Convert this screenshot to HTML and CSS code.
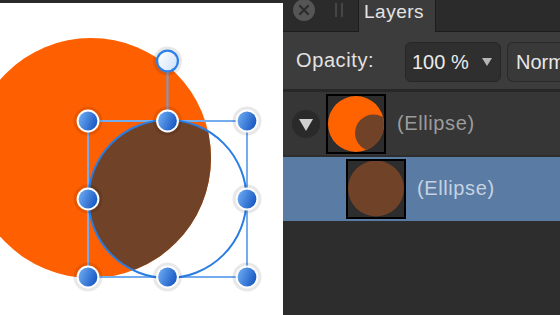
FILE: index.html
```html
<!DOCTYPE html>
<html>
<head>
<meta charset="utf-8">
<link rel="stylesheet" href="styles.css">
</head>
<body>
<div class="app">
  <div class="canvas-col">
    <svg class="canvas" width="283" height="312" viewBox="0 3 283 312">
      <defs>
        <clipPath id="orangeClip"><circle cx="91" cy="158" r="120"/></clipPath>
        <linearGradient id="hblue" x1="0" y1="0.3" x2="1" y2="0.7">
          <stop offset="0" stop-color="#6aa8f0"/>
          <stop offset="1" stop-color="#1656c2"/>
        </linearGradient>
        <linearGradient id="hwhite" x1="0" y1="0.2" x2="1" y2="0.8">
          <stop offset="0" stop-color="#ffffff"/>
          <stop offset="1" stop-color="#cfe2f8"/>
        </linearGradient>
        <g id="handle">
          <circle r="14.5" fill="rgba(0,0,0,0.09)"/>
          <circle r="11.4" fill="#ffffff"/>
          <circle r="9.4" fill="url(#hblue)"/>
        </g>
      </defs>
      <rect x="0" y="3" width="283" height="312" fill="#ffffff"/>
      <circle cx="91" cy="158" r="120" fill="#fe5f00"/>
      <circle cx="167.5" cy="199" r="79" fill="#704227" clip-path="url(#orangeClip)"/>
      <rect x="88" y="121" width="159" height="156" fill="none" stroke="#74acee" stroke-width="2"/>
      <line x1="167.5" y1="61" x2="167.5" y2="121" stroke="#6a9fe2" stroke-width="2"/>
      <circle cx="167.5" cy="199" r="79" fill="none" stroke="#2a7de2" stroke-width="2"/>
      <use href="#handle" x="88" y="121"/>
      <use href="#handle" x="167.5" y="121"/>
      <use href="#handle" x="247" y="121"/>
      <use href="#handle" x="88" y="199"/>
      <use href="#handle" x="247" y="199"/>
      <use href="#handle" x="88" y="277"/>
      <use href="#handle" x="167.5" y="277"/>
      <use href="#handle" x="247" y="277"/>
      <circle cx="167.5" cy="61" r="14.5" fill="rgba(0,0,0,0.09)"/>
      <circle cx="167.5" cy="61" r="10.4" fill="url(#hwhite)" stroke="#2e80e8" stroke-width="2.2"/>
    </svg>
  </div>

  <div class="panel">
    <div class="tabbar">
      <div class="tab-tools">
        <span class="close-btn">
          <svg width="22" height="22" viewBox="0 0 22 22">
            <circle cx="11" cy="11" r="11" fill="#555555"/>
            <path d="M7 7 L15 15 M15 7 L7 15" stroke="#2c2c2c" stroke-width="2.2" stroke-linecap="round"/>
          </svg>
        </span>
        <span class="grip"><i></i><i></i></span>
      </div>
      <div class="tab active">Layers</div>
      <div class="tab-fill"></div>
    </div>

    <div class="opacity-row">
      <span class="label">Opacity:</span>
      <div class="dropdown">
        <span class="value">100 %</span>
        <span class="caret"></span>
      </div>
      <div class="blend">Norm</div>
    </div>

    <div class="layers">
      <div class="layer-row">
        <span class="disclose"><span class="tri"></span></span>
        <span class="thumb">
          <svg width="56" height="56" viewBox="0 0 56 56">
            <defs><clipPath id="tclip"><circle cx="28" cy="28" r="28"/></clipPath></defs>
            <circle cx="28" cy="28" r="28" fill="#fe6300"/>
            <circle cx="45.5" cy="37" r="18.5" fill="#704227" clip-path="url(#tclip)"/>
          </svg>
        </span>
        <span class="name">(Ellipse)</span>
      </div>
      <div class="layer-row child selected">
        <span class="thumb">
          <svg width="56" height="56" viewBox="0 0 56 56">
            <circle cx="28" cy="27.5" r="28" fill="#704227"/>
          </svg>
        </span>
        <span class="name">(Ellipse)</span>
      </div>
    </div>
  </div>
</div>
</body>
</html>
```

FILE: styles.css
```css
html, body {
  margin: 0;
  padding: 0;
  background: #2b2b2b;
  overflow: hidden;
}

.app {
  display: flex;
  width: 560px;
  height: 315px;
  font-family: "Liberation Sans", Arial, sans-serif;
}

.canvas-col {
  width: 283px;
  flex: none;
  padding-top: 3px;
  background: #2a2a2a;
}

.canvas {
  display: block;
}

.panel {
  flex: 1;
  display: flex;
  flex-direction: column;
  background: #2d2d2d;
  overflow: hidden;
}

.tabbar {
  display: flex;
  height: 32px;
  flex: none;
  background: #2b2b2b;
}

.tab-tools {
  width: 75px;
  box-sizing: border-box;
  border-bottom: 1px solid #1c1c1c;
  display: flex;
  align-items: flex-start;
  padding-left: 10px;
}

.close-btn {
  display: block;
  width: 22px;
  height: 22px;
  margin-top: -1px;
}

.close-btn svg {
  display: block;
}

.grip {
  display: flex;
  gap: 4px;
  margin-left: 20px;
  margin-top: 3px;
}

.grip i {
  display: block;
  width: 2px;
  height: 14px;
  background: #464646;
}

.tab {
  width: 78px;
  box-sizing: border-box;
  border-left: 1px solid #1c1c1c;
  border-right: 1px solid #1c1c1c;
  background: #3c3c3c;
  color: #e4e4e4;
  font-size: 19px;
  letter-spacing: 0.5px;
  padding-left: 5px;
  line-height: 23px;
}

.tab-fill {
  flex: 1;
  border-bottom: 1px solid #1c1c1c;
}

.opacity-row {
  height: 57px;
  flex: none;
  display: flex;
  align-items: center;
  background: #3c3c3c;
  padding-left: 13px;
  border-bottom: 3px solid #272727;
  white-space: nowrap;
}

.label {
  color: #e2e2e2;
  font-size: 20px;
  letter-spacing: 0.6px;
  width: 109px;
  flex: none;
  margin-top: 0;
}

.dropdown {
  width: 96px;
  height: 40px;
  flex: none;
  box-sizing: border-box;
  background: #2f2f2f;
  border: 1px solid #262626;
  border-radius: 6px;
  display: flex;
  align-items: center;
  padding-left: 6px;
  margin-top: 2px;
}

.value {
  color: #ebebeb;
  font-size: 20px;
  flex: 1;
  padding-top: 2px;
}

.caret {
  width: 0;
  height: 0;
  border-left: 5px solid transparent;
  border-right: 5px solid transparent;
  border-top: 8px solid #b5b5b5;
  margin-right: 8px;
}

.blend {
  flex: none;
  margin-left: 6px;
  margin-top: 2px;
  height: 40px;
  width: 60px;
  box-sizing: border-box;
  background: #393939;
  border: 1px solid #2a2a2a;
  border-right: none;
  border-radius: 6px 0 0 6px;
  color: #e8e8e8;
  font-size: 20px;
  line-height: 38px;
  padding-left: 8px;
}

.layers {
  display: flex;
  flex-direction: column;
  gap: 2px;
}

.layer-row {
  height: 63px;
  display: flex;
  align-items: center;
  background: #363636;
  padding-left: 9px;
}

.layer-row.child {
  height: 64px;
  padding-left: 63px;
}

.layer-row.selected {
  background: #5a7ca4;
}

.disclose {
  width: 28px;
  height: 28px;
  border-radius: 50%;
  background: #2a2a2a;
  display: flex;
  align-items: center;
  justify-content: center;
  margin-right: 6px;
  flex: none;
}

.tri {
  width: 0;
  height: 0;
  border-left: 7px solid transparent;
  border-right: 7px solid transparent;
  border-top: 12px solid #cfcfcf;
  margin-top: 2px;
}

.thumb {
  width: 60px;
  height: 60px;
  box-sizing: border-box;
  border: 2px solid #000000;
  background: #2d2d2d;
  flex: none;
  display: block;
}

.thumb svg {
  display: block;
}

.name {
  margin-left: 11px;
  font-size: 20px;
  letter-spacing: 0.6px;
  color: #9c9c9c;
  margin-top: -1px;
}

.selected .name {
  color: #c6d2e1;
}
```
